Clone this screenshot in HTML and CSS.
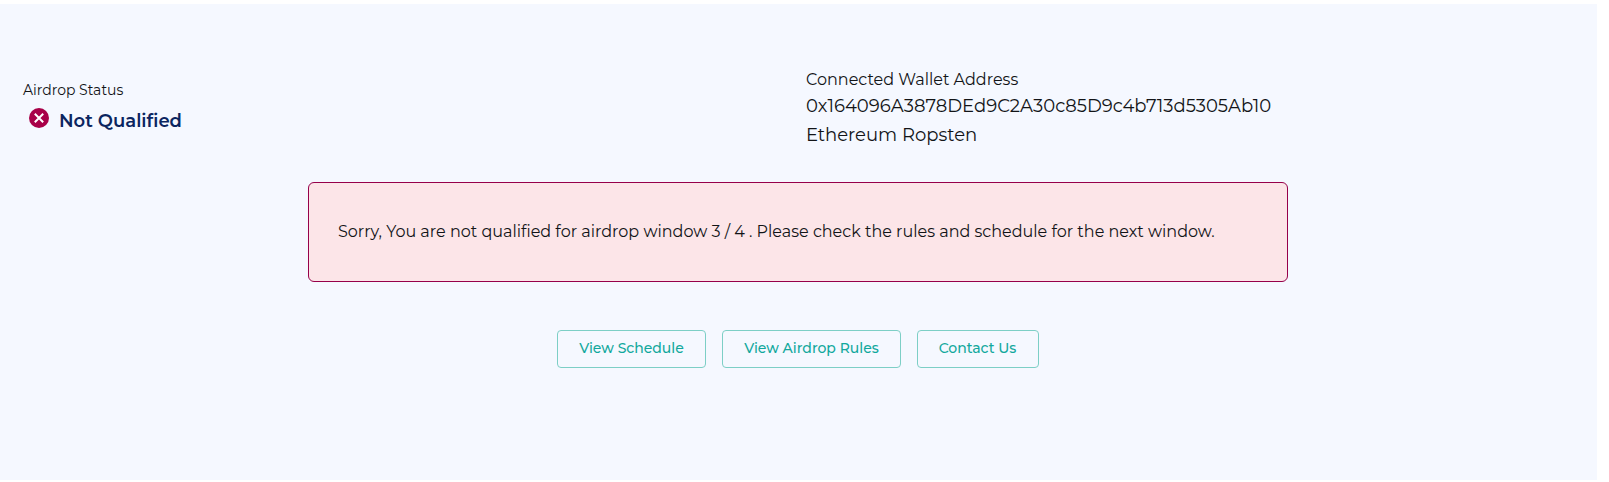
FILE: index.html
```html
<!DOCTYPE html>
<html lang="en">
<head>
<meta charset="utf-8">
<title>Airdrop Status</title>
<link rel="stylesheet" href="styles.css">
</head>
<body>
<main class="panel">
  <header class="summary">
    <section class="status">
      <div class="status-label"><span>Airdrop Status</span></div>
      <div class="status-row">
        <svg class="status-icon" viewBox="0 0 20 20" aria-hidden="true"><circle cx="10" cy="10" r="10"/><path d="M5.8 5.8l8.4 8.4M14.2 5.8l-8.4 8.4"/></svg>
        <span class="status-value">Not Qualified</span>
      </div>
    </section>
    <section class="wallet">
      <div class="wallet-label"><span>Connected Wallet Address</span></div>
      <div class="wallet-address"><span>0x164096A3878DEd9C2A30c85D9c4b713d5305Ab10</span></div>
      <div class="wallet-network"><span>Ethereum Ropsten</span></div>
    </section>
  </header>
  <div class="alert"><span>Sorry, You are not qualified for airdrop window 3 / 4 . Please check the rules and schedule for the next window.</span></div>
  <nav class="actions">
    <button class="btn btn-schedule" type="button">View Schedule</button>
    <button class="btn btn-rules" type="button">View Airdrop Rules</button>
    <button class="btn btn-contact" type="button">Contact Us</button>
  </nav>
</main>
</body>
</html>
```
FILE: styles.css
```css
* { box-sizing: border-box; }
body {
  margin: 0;
  padding-top: 4px;
  background: #fff;
  color: #121417;
  font-family: Montserrat, Inter, sans-serif;
}
.panel {
  width: 1597px;
  height: 476px;
  background: #f5f8ff;
  overflow: hidden;
}
.summary {
  display: grid;
  grid-template-columns: 783px 1fr;
  height: 178px;
  padding-left: 23px;
}
.status { padding-top: 76px; white-space: nowrap; }
.status-label { font-size: 14px; line-height: 20px; }
.status-row {
  display: flex;
  height: 36px;
  padding: 8px 0 0 6px;
  gap: 10px;
}
.status-icon { width: 20px; height: 20px; }
.status-icon circle { fill: #a80048; }
.status-icon path { stroke: #fff; stroke-width: 2; fill: none; }
.status-value {
  color: #0b2560;
  font-size: 18px;
  font-weight: 600;
  line-height: 26px;
}
.wallet { padding-top: 64px; white-space: nowrap; }
.wallet-label { font-size: 16px; line-height: 24px; }
.wallet-address { font-size: 18px; line-height: 28px; }
.wallet-network { font-size: 18px; line-height: 30px; }
.alert {
  width: 980px;
  height: 100px;
  margin-left: 308px;
  padding: 37px 29px 35px;
  border: 1px solid #96004a;
  border-radius: 6px;
  background: #fce5e8;
  font-size: 16px;
  line-height: 24px;
  white-space: nowrap;
}
.actions {
  display: flex;
  justify-content: center;
  gap: 16px;
  margin-top: 48px;
  padding-right: 1px;
}
.btn {
  height: 38px;
  padding: 0 0 2px;
  border: 1px solid #7dcfc6;
  border-radius: 4px;
  background: transparent;
  color: #12a89d;
  font-family: inherit;
  font-size: 14px;
  font-weight: 500;
  white-space: nowrap;
}
.btn-schedule { width: 149px; }
.btn-rules { width: 179px; }
.btn-contact { width: 122px; padding-right: 1px; }
```
